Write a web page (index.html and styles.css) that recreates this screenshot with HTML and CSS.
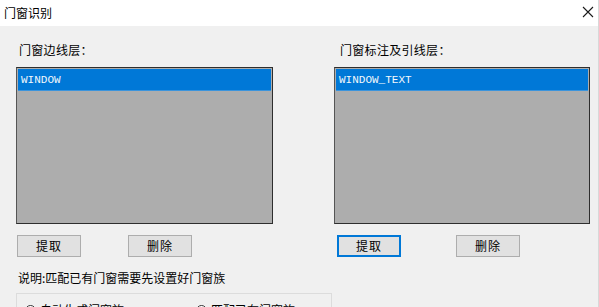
FILE: index.html
```html
<!DOCTYPE html>
<html lang="zh-CN">
<head>
<meta charset="utf-8">
<title>门窗识别</title>
<link rel="stylesheet" href="styles.css">
</head>
<body>
<div class="dialog">
  <div class="titlebar">
    <span class="title">门窗识别</span>
    <svg class="close" width="12" height="12" viewBox="0 0 12 12"><path d="M1 1 L11 11 M11 1 L1 11" stroke="#1a1a1a" stroke-width="1.1" fill="none"/></svg>
  </div>
  <div class="content">
    <div class="panels">
      <div class="panel panel-left">
        <div class="label">门窗边线层：</div>
        <div class="listbox"><div class="item selected">WINDOW</div></div>
        <div class="buttons">
          <button class="btn">提取</button>
          <button class="btn">删除</button>
        </div>
      </div>
      <div class="panel panel-right">
        <div class="label">门窗标注及引线层：</div>
        <div class="listbox"><div class="item selected">WINDOW_TEXT</div></div>
        <div class="buttons">
          <button class="btn focused">提取</button>
          <button class="btn">删除</button>
        </div>
      </div>
    </div>
    <div class="note">说明:匹配已有门窗需要先设置好门窗族</div>
    <div class="group">
      <label class="radio"><span class="circle"></span>自动生成门窗族</label>
      <label class="radio radio2"><span class="circle"></span>匹配已有门窗族</label>
    </div>
  </div>
</div>
</body>
</html>
```
FILE: styles.css
```css
html, body {
  margin: 0;
  padding: 0;
  background: #f0f0f0;
  overflow: hidden;
}
body {
  width: 599px;
  height: 307px;
  font-family: "Noto Sans CJK SC", "Noto Sans", sans-serif;
  font-size: 12px;
  color: #000;
}
.dialog {
  display: flex;
  flex-direction: column;
  height: 307px;
  border-right: 1px solid #d8d8d8;
  box-sizing: border-box;
  overflow: hidden;
}
.dialog > *, .content > *, .panel > * {
  flex-shrink: 0;
}
.titlebar {
  height: 26px;
  background: #fff;
  display: flex;
  align-items: center;
  justify-content: space-between;
  padding: 0 4px 1px 4px;
  box-sizing: border-box;
}
.title {
  font-size: 12px;
  line-height: 16px;
}
.close {
  margin-top: -2px;
}
.content {
  display: flex;
  flex-direction: column;
}
.panels {
  display: flex;
  padding-top: 16px;
}
.panel {
  display: flex;
  flex-direction: column;
}
.panel-left {
  margin-left: 16px;
  width: 257px;
}
.panel-right {
  margin-left: 61px;
  width: 256px;
}
.label {
  line-height: 16px;
  height: 16px;
  margin-bottom: 9px;
  padding-left: 3px;
  letter-spacing: 0.3px;
}
.panel-right .label {
  padding-left: 6px;
}
.listbox {
  height: 157px;
  box-sizing: border-box;
  background: #adadad;
  border: 1px solid #2e2e2e;
  border-left-color: #555;
  padding: 1px;
}
.item {
  height: 22px;
  line-height: 22px;
  font-family: "Liberation Mono", "DejaVu Sans Mono", monospace;
  font-size: 11px;
  padding-left: 3px;
  color: #f4f8fc;
}
.selected {
  background: #0078d7;
  border-bottom: 1px solid #3b94dc;
  box-sizing: border-box;
}
.buttons {
  display: flex;
  margin-top: 11px;
}
.btn {
  width: 64px;
  height: 22px;
  box-sizing: border-box;
  background: #e1e1e1;
  border: 1px solid #adadad;
  font-family: "Noto Sans CJK SC", sans-serif;
  font-size: 12px;
  color: #000;
  padding: 0;
  line-height: 18px;
  letter-spacing: 1px;
}
.panel-left .btn:first-child { margin-left: 1px; }
.panel-left .btn + .btn { margin-left: 47px; }
.panel-right .btn:first-child { margin-left: 3px; }
.panel-right .btn + .btn { margin-left: 55px; }
.btn.focused {
  border: 2px solid #0078d7;
}
.note {
  margin-top: 13px;
  padding-left: 18px;
  line-height: 16px;
  height: 16px;
}
.group {
  margin-top: 7px;
  margin-left: 16px;
  width: 316px;
  height: 30px;
  box-sizing: border-box;
  border: 1px solid #dcdcdc;
  border-bottom: none;
  display: flex;
  align-items: flex-start;
  padding-top: 9px;
  padding-left: 8px;
}
.radio {
  display: flex;
  align-items: center;
  line-height: 14px;
}
.radio2 {
  margin-left: 72px;
}
.circle {
  width: 11px;
  height: 11px;
  border: 1px solid #333;
  border-radius: 50%;
  background: #fff;
  margin-right: 4px;
  box-sizing: border-box;
}
```
